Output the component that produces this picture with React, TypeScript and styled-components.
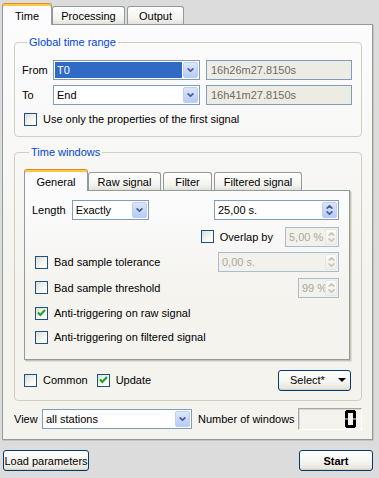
import React from 'react'
import styled, { createGlobalStyle, css } from 'styled-components'

const GlobalStyle = createGlobalStyle`
  html, body { margin: 0; padding: 0; background: #dcdcdc; }
  body { font-family: 'Liberation Sans', Arial, sans-serif; font-size: 11px; color: #000; }
  * { box-sizing: border-box; }
`

const paneBg = 'linear-gradient(#fcfcfe, #f4f3ee 60%)'

const Window = styled.div`
  width: 379px;
  height: 478px;
  padding: 0 6px 0 2px;
  display: flex;
  flex-direction: column;
`

const TabBar = styled.div<{ $h: number }>`
  display: flex;
  align-items: flex-end;
  height: ${(p) => p.$h}px;
  flex: none;
  margin-bottom: -1px;
  position: relative;
  z-index: 1;
`

const Tab = styled.div<{ $active?: boolean; $w: number; $gap?: number }>`
  width: ${(p) => p.$w}px;
  margin-left: ${(p) => p.$gap || 0}px;
  display: flex;
  align-items: center;
  justify-content: center;
  white-space: nowrap;
  border: 1px solid #919b9c;
  border-bottom: none;
  border-radius: 3px 3px 0 0;
  ${(p) =>
    p.$active
      ? css`
          height: 22px;
          background: #fcfcfe;
          border-top: 1px solid #e68b2c;
          box-shadow: inset 0 2px 0 #ffc73c;
          padding-top: 2px;
        `
      : css`
          height: 18px;
          margin-bottom: 1px;
          background: linear-gradient(#ffffff, #f3f3ef 70%, #e3e2da);
        `}
`

const Pane = styled.div<{ $h: number }>`
  height: ${(p) => p.$h}px;
  flex: none;
  border: 1px solid #919b9c;
  background: ${paneBg};
  box-shadow: 1px 1px 0 #c7c5b2;
  padding: 11px 10px 0 11px;
  position: relative;
`

const InnerPane = styled.div<{ $h: number }>`
  height: ${(p) => p.$h}px;
  width: 326px;
  border: 1px solid #919b9c;
  background: ${paneBg};
  box-shadow: 1px 1px 0 #c7c5b2, 2px 2px 0 #e2e0d5;
  padding: 6px 10px 0 10px;
  position: relative;
  display: flex;
  flex-direction: column;
`

const Group = styled.fieldset<{ $pad: string; $mt?: number }>`
  margin: ${(p) => p.$mt || 0}px 0 0 0;
  min-inline-size: 0;
  border: 1px solid #d0d0bf;
  border-radius: 4px;
  padding: ${(p) => p.$pad};
  display: flex;
  flex-direction: column;
`

const Legend = styled.legend`
  color: #0046d5;
  line-height: 13px;
  padding: 0 2px;
  margin-left: 5px;
`

const Row = styled.div<{ $h: number; $mt?: number; $pl?: number }>`
  display: flex;
  align-items: center;
  height: ${(p) => p.$h}px;
  margin-top: ${(p) => p.$mt || 0}px;
  padding-left: ${(p) => p.$pl || 0}px;
  white-space: nowrap;
`

const Spacer = styled.div`
  flex: 1;
`

const FieldLabel = styled.span<{ $w?: number; $ml?: number }>`
  width: ${(p) => (p.$w ? `${p.$w}px` : 'auto')};
  margin-left: ${(p) => p.$ml || 0}px;
  flex: none;
`

const ComboFrame = styled.div<{ $w: number; $ml?: number }>`
  width: ${(p) => p.$w}px;
  margin-left: ${(p) => p.$ml || 0}px;
  height: 20px;
  flex: none;
  border: 1px solid #7f9db9;
  background: #fff;
  display: flex;
  padding: 1px;
  gap: 1px;
`

const ComboText = styled.div<{ $sel?: boolean; $dim?: boolean }>`
  flex: 1;
  min-width: 0;
  display: flex;
  align-items: center;
  padding: 0 0 0 2px;
  color: ${(p) => (p.$dim ? '#aca899' : '#000')};
  ${(p) =>
    p.$sel &&
    css`
      background: #316ac5;
      color: #fff;
    `}
`

const ArrowButton = styled.div<{ $off?: boolean }>`
  width: ${(p) => (p.$off ? 12 : 15)}px;
  flex: none;
  display: flex;
  flex-direction: column;
  align-items: center;
  justify-content: center;
  gap: 2px;
  border-radius: 2px;
  border: 1px solid ${(p) => (p.$off ? '#e8e7e0' : '#bccef5')};
  background: ${(p) => (p.$off ? 'linear-gradient(#fbfbf8, #efeee8)' : 'linear-gradient(#dce6fd, #b6cbf7)')};
`

const ReadOnly = styled.div<{ $w: number; $ml?: number }>`
  width: ${(p) => p.$w}px;
  margin-left: ${(p) => p.$ml || 0}px;
  height: 20px;
  border: 1px solid #7f9db9;
  background: #ecebe4;
  color: #6f6d66;
  display: flex;
  align-items: center;
  padding: 0 4px;
`

const SpinFrame = styled(ComboFrame)<{ $off?: boolean }>`
  border-color: ${(p) => (p.$off ? '#a9bad1' : '#7f9db9')};
  background: ${(p) => (p.$off ? '#f2f1ec' : '#fff')};
  gap: 0;
`

const Box = styled.span<{ $ml?: number }>`
  width: 13px;
  height: 13px;
  flex: none;
  margin-left: ${(p) => p.$ml || 0}px;
  border: 1px solid #1c5180;
  background: linear-gradient(135deg, #dcdcd7, #fbfbf9 70%, #ffffff);
  display: flex;
  align-items: center;
  justify-content: center;
`

const CheckText = styled.span`
  margin-left: 6px;
`

const PushButton = styled.button<{ $w: number; $bold?: boolean; $ml?: number }>`
  width: ${(p) => p.$w}px;
  height: 21px;
  margin-left: ${(p) => p.$ml || 0}px;
  padding: 0;
  font: inherit;
  font-weight: ${(p) => (p.$bold ? 700 : 400)};
  color: #000;
  border: 1px solid #003c74;
  border-radius: 3px;
  background: linear-gradient(#ffffff, #f4f4f0 60%, #e3e0d6);
  box-shadow: inset 0 -1px 0 #d6d0c5;
  display: flex;
  align-items: center;
  justify-content: center;
  flex: none;
`

const MenuButton = styled(PushButton)`
  justify-content: flex-start;
  padding: 0 4px 0 11px;
  margin-right: -1px;

  svg {
    margin-left: auto;
  }
`

const Lcd = styled.div`
  width: 64px;
  height: 22px;
  margin-left: auto;
  border: 1px solid;
  border-color: #a7a6a0 #ffffff #ffffff #a7a6a0;
  box-shadow: inset 1px 1px 0 #d8d7d0;
  display: flex;
  align-items: center;
  justify-content: flex-end;
  padding-right: 5px;
`

const Footer = styled.div`
  display: flex;
  align-items: flex-start;
  padding: 10px 0 0 1px;
`

const Chevron = ({ up, off }: { up?: boolean; off?: boolean }) => (
  <svg width="7" height="4" viewBox="0 0 7 4">
    <path
      d={up ? 'M0.6 3.6 L3.5 0.8 L6.4 3.6' : 'M0.6 0.4 L3.5 3.2 L6.4 0.4'}
      fill="none"
      stroke={off ? '#c9c8c0' : '#4d6185'}
      strokeWidth="1.7"
    />
  </svg>
)

const Tick = () => (
  <svg width="9" height="8" viewBox="0 0 9 8">
    <path d="M1 3.5 L3.3 6 L8 1" fill="none" stroke="#21a121" strokeWidth="2" />
  </svg>
)

const Combo = ({ w, value, sel, ml }: { w: number; value: string; sel?: boolean; ml?: number }) => (
  <ComboFrame $w={w} $ml={ml}>
    <ComboText $sel={sel}>{value}</ComboText>
    <ArrowButton>
      <Chevron />
    </ArrowButton>
  </ComboFrame>
)

const Spin = ({ w, value, off, ml }: { w: number; value: string; off?: boolean; ml?: number }) => (
  <SpinFrame $w={w} $off={off} $ml={ml}>
    <ComboText $dim={off}>{value}</ComboText>
    <ArrowButton $off={off}>
      <Chevron up off={off} />
      <Chevron off={off} />
    </ArrowButton>
  </SpinFrame>
)

const Check = ({ label, checked, ml }: { label: string; checked?: boolean; ml?: number }) => (
  <>
    <Box $ml={ml}>{checked && <Tick />}</Box>
    <CheckText>{label}</CheckText>
  </>
)

const LcdZero = () => (
  <svg width="11" height="18" viewBox="0 0 11 18">
    <title>0</title>
    <g fill="#000">
      <rect x="1" y="0" width="9" height="3" />
      <rect x="1" y="15" width="9" height="3" />
      <rect x="0" y="1" width="3" height="7.5" />
      <rect x="0" y="9.5" width="3" height="7.5" />
      <rect x="8" y="1" width="3" height="7.5" />
      <rect x="8" y="9.5" width="3" height="7.5" />
    </g>
  </svg>
)

export default function App() {
  return (
    <>
      <GlobalStyle />
      <Window>
        <TabBar $h={25}>
          <Tab $active $w={50}>Time</Tab>
          <Tab $w={73}>Processing</Tab>
          <Tab $w={57} $gap={2}>Output</Tab>
        </TabBar>
        <Pane $h={416}>
          <Group $pad="11px 9px 8px 7px">
            <Legend>Global time range</Legend>
            <Row $h={20}>
              <FieldLabel $w={31}>From</FieldLabel>
              <Combo w={147} value="T0" sel />
              <ReadOnly $w={146} $ml={6}>16h26m27.8150s</ReadOnly>
            </Row>
            <Row $h={20} $mt={5}>
              <FieldLabel $w={31}>To</FieldLabel>
              <Combo w={147} value="End" />
              <ReadOnly $w={146} $ml={6}>16h41m27.8150s</ReadOnly>
            </Row>
            <Row $h={18} $mt={5} $pl={2}>
              <Check label="Use only the properties of the first signal" />
            </Row>
          </Group>

          <Group $pad="10px 11px 10px 9px" $mt={9}>
            <Legend>Time windows</Legend>
            <TabBar $h={22}>
              <Tab $active $w={64}>General</Tab>
              <Tab $w={73}>Raw signal</Tab>
              <Tab $w={49} $gap={2}>Filter</Tab>
              <Tab $w={88} $gap={2}>Filtered signal</Tab>
            </TabBar>
            <InnerPane $h={170}>
              <Row $h={26}>
                <FieldLabel $ml={-3}>Length</FieldLabel>
                <Combo w={77} ml={6} value="Exactly" />
                <Spacer />
                <Spin w={125} value="25,00 s." />
              </Row>
              <Row $h={27}>
                <Spacer />
                <Check label="Overlap by" />
                <Spin w={54} ml={12} value="5,00 %" off />
              </Row>
              <Row $h={24}>
                <Check label="Bad sample tolerance" />
                <Spacer />
                <Spin w={121} value="0,00 s." off />
              </Row>
              <Row $h={27}>
                <Check label="Bad sample threshold" />
                <Spacer />
                <Spin w={41} value="99 %" off />
              </Row>
              <Row $h={24}>
                <Check label="Anti-triggering on raw signal" checked />
              </Row>
              <Row $h={24}>
                <Check label="Anti-triggering on filtered signal" />
              </Row>
            </InnerPane>
            <Row $h={20} $mt={10}>
              <Check label="Common" />
              <Check label="Update" checked ml={9} />
              <Spacer />
              <MenuButton as="div" $w={73}>
                <span>Select*</span>
                <svg width="8" height="4" viewBox="0 0 8 4">
                  <path d="M0 0 H8 L4 4 Z" fill="#000" />
                </svg>
              </MenuButton>
            </Row>
          </Group>

          <Row $h={22} $mt={7}>
            <FieldLabel $w={28}>View</FieldLabel>
            <Combo w={150} value="all stations" />
            <FieldLabel $ml={6}>Number of windows</FieldLabel>
            <Lcd>
              <LcdZero />
            </Lcd>
          </Row>
        </Pane>
        <Footer>
          <PushButton $w={86}>Load parameters</PushButton>
          <Spacer />
          <PushButton $w={74} $bold>
            Start
          </PushButton>
        </Footer>
      </Window>
    </>
  )
}
